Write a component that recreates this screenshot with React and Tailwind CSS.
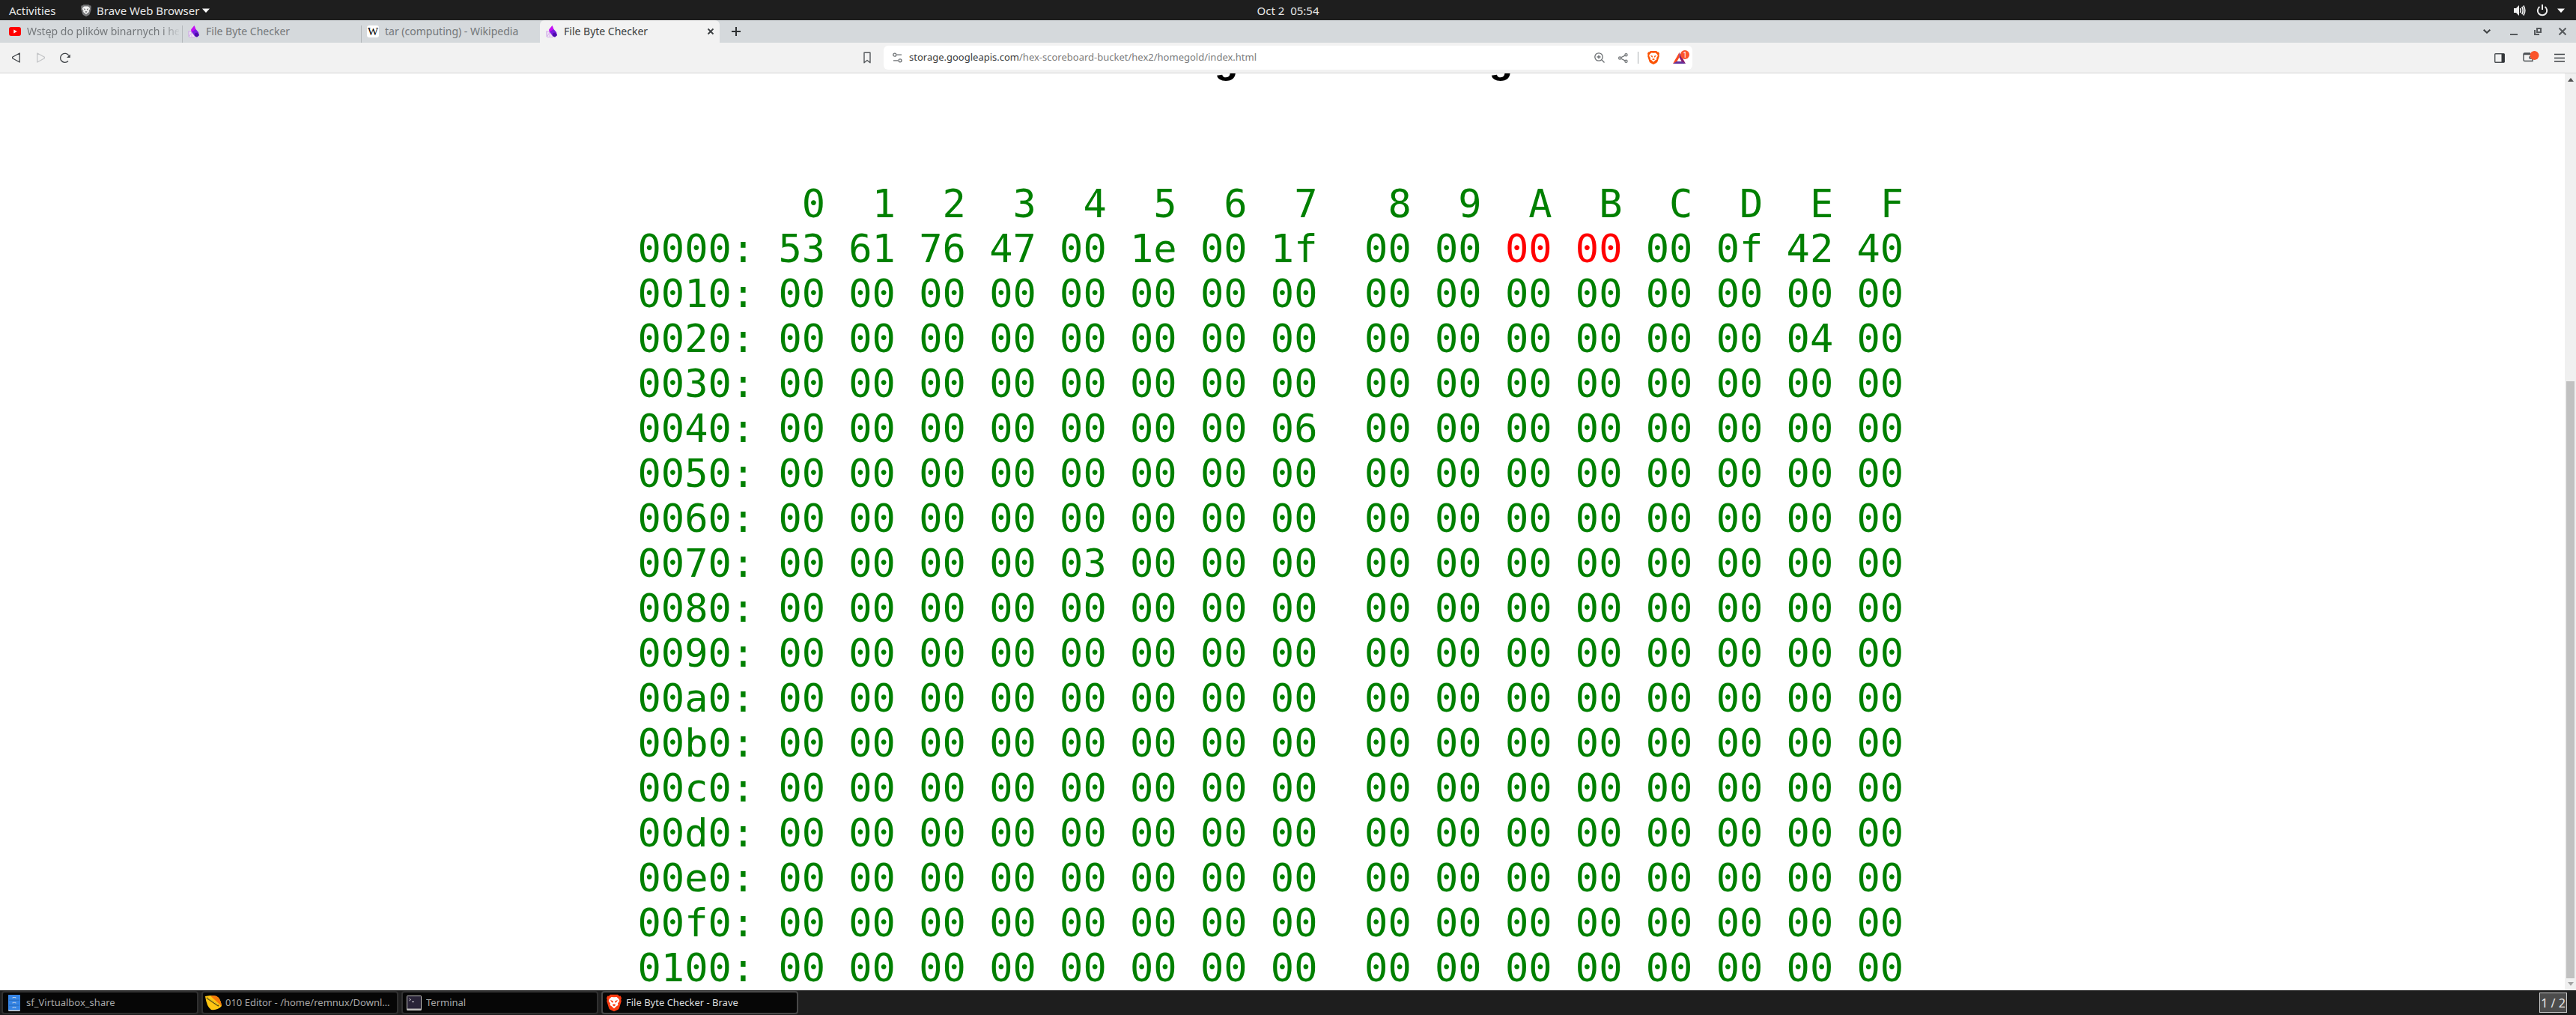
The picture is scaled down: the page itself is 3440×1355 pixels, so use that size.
import React from "react";

const cols = "0123456789ABCDEF".split("");
const special = {
  0: "53 61 76 47 00 1e 00 1f 00 00 00 00 00 0f 42 40",
  2: "00 00 00 00 00 00 00 00 00 00 00 00 00 00 04 00",
  4: "00 00 00 00 00 00 00 06 00 00 00 00 00 00 00 00",
  7: "00 00 00 00 03 00 00 00 00 00 00 00 00 00 00 00",
};
const rows = Array.from({ length: 17 }, (_, i) => ({
  addr: (i * 16).toString(16).padStart(4, "0") + ":",
  bytes: special[i] ? special[i].split(" ") : Array(16).fill("00"),
}));

function cellPad(c) {
  if (c === 8) return "pl-[2ch]";
  if (c === 15) return "pl-[1ch] pr-[1ch]";
  return "pl-[1ch]";
}

function Lion({ className, shield, face }) {
  return (
    <svg viewBox="0 0 16 18" className={className} aria-hidden="true">
      <path d="M4 0h8l1.6 1.6 1.4-.2 1 2.4-.6 1.5.4 1.6-2.2 7.2q-.4 1.2-1.6 2L8 18l-4-1.9q-1.2-.8-1.6-2L.2 6.9.6 5.3 0 3.800l1-2.400 1.400.2Z" fill={shield} />
      <path d="M8 2.800 5.200 2.600 2.800 4.800 2.200 6.800 4 9.400 3.600 11.200 5.600 12.600 8 14.800 10.400 12.600 12.400 11.200 12 9.400 13.800 6.800 13.200 4.800 10.800 2.600Z" fill={face} />
      <path d="M4 5.800 7 6.800 6.700 9 4.900 7.300ZM12 5.800 9 6.800 9.300 9 11.100 7.300ZM6 11 8 9.900 10 11 8 12.500Z" fill={shield} />
    </svg>
  );
}

function Crystal() {
  return (
    <svg viewBox="0 0 16 16" className="size-4 shrink-0" aria-hidden="true">
      <path d="M1 7.500 5 9l5 6.500H1.500ZM1 7.500v7.500M5 9l-3.500 6M5 9v6" fill="#f3e8f8" stroke="#cfa8e6" strokeWidth=".8" />
      <path d="M8.500 0 4 5.500 4.500 8.500 8 9.500 10.500 5Z" fill="#c60cf5" />
      <path d="M5 8.500 10.500 5 14 9 15 13 12 15.500 9 14Z" fill="#7a1be0" />
      <path d="m9.500 10 3-.5 2.500 3.500-3 2.500-3-1.500Z" fill="#4d0dab" />
    </svg>
  );
}

function Youtube() {
  return (
    <svg viewBox="0 0 16 12" className="w-4 shrink-0" aria-hidden="true">
      <rect width="16" height="12" rx="3" fill="#f00" />
      <path d="m6.300 3.500 4.500 2.500-4.500 2.500Z" fill="#fff" />
    </svg>
  );
}

function Wiki() {
  return (
    <span className="flex size-4 shrink-0 items-center justify-center rounded-[3px] bg-white font-['Liberation_Serif',serif] text-[15px] leading-4 text-black" aria-hidden="true">W</span>
  );
}

function TopBar() {
  return (
    <header className="grid h-[27px] shrink-0 grid-cols-[1fr_auto_1fr] items-center bg-[#1e1e1e] text-[15px] leading-5 text-[#e6e6e6]">
      <div className="flex items-center pl-3">
        <button className="w-24 text-left">Activities</button>
        <button className="flex items-center">
          <Lion className="mr-[7px] h-4 w-3.5" shield="#77787a" face="#f4f4f4" />
          Brave Web Browser
          <svg viewBox="0 0 10 6" className="ml-1 w-2.5" aria-hidden="true"><path d="M0 .5h10L5 6Z" fill="#fff" /></svg>
        </button>
      </div>
      <time className="whitespace-pre">Oct 2  05:54</time>
      <button className="flex items-center justify-self-end pr-[15px]" aria-label="System menu">
        <svg viewBox="0 0 16 16" className="mr-3.5 size-4" fill="none" stroke="#eee" strokeWidth="1.700">
          <path d="M0 5h3l4-4v14l-4-4H0Z" fill="#eee" stroke="none" />
          <path d="M8.500 5q1.500 3 0 6M10.800 3q2.800 5 0 10M12.800 1.500q4 6.500 0 13" />
        </svg>
        <svg viewBox="0 0 16 16" className="mr-3 size-4" fill="none" stroke="#eee" strokeWidth="2">
          <path d="M4.500 3a6.200 6.200 0 1 0 7 0M8 0v7" />
        </svg>
        <svg viewBox="0 0 10 6" className="w-2.5"><path d="M0 .5h10L5 6Z" fill="#fff" /></svg>
      </button>
    </header>
  );
}

function Tab({ icon, title, className }) {
  return (
    <button className={"flex items-center overflow-hidden whitespace-nowrap text-[#74787b] " + className}>
      {icon}
      <span className="ml-2 min-w-0 flex-1 overflow-hidden text-left">{title}</span>
    </button>
  );
}

function TabStrip() {
  return (
    <nav className="flex h-[30px] shrink-0 items-stretch bg-[#d5d9dc] text-sm" aria-label="Tabs">
      <Tab className="w-[243px] pl-3 pr-1 [&>span]:[mask-image:linear-gradient(to_right,#000_180px,transparent_205px)]" icon={<Youtube />} title="Wstęp do plików binarnych i hex" />
      <span className="mt-[7px] w-px bg-[#b4b8bb]" />
      <Tab className="w-[238px] pl-[7px]" icon={<Crystal />} title="File Byte Checker" />
      <span className="mt-[7px] w-px bg-[#b4b8bb]" />
      <Tab className="w-[238px] pl-[7px]" icon={<Wiki />} title="tar (computing) - Wikipedia" />
      <div className="flex w-60 items-center rounded-t-md bg-[#f2f2f2] pl-2 pr-[7px] text-[#3b3e40]">
        <Crystal />
        <button className="ml-2 flex-1 text-left">File Byte Checker</button>
        <button aria-label="Close tab">
          <svg viewBox="0 0 10 10" className="size-2.5" stroke="#3b3e40" strokeWidth="1.800"><path d="m1.500 1.500 7 7M8.500 1.500l-7 7" /></svg>
        </button>
      </div>
      <button className="ml-4" aria-label="New tab">
        <svg viewBox="0 0 12 12" className="size-3" stroke="#2f3234" strokeWidth="2"><path d="M6 0v12M0 6h12" /></svg>
      </button>
      <div className="ml-auto flex items-center pr-[13px]">
        <button aria-label="Search tabs" className="mr-[26px]">
          <svg viewBox="0 0 10 6" className="w-2.5" fill="none" stroke="#3b3e40" strokeWidth="2"><path d="m.7.7 4.300 4 4.300-4" /></svg>
        </button>
        <button aria-label="Minimize" className="mr-[22px]">
          <svg viewBox="0 0 10 10" className="size-2.5" stroke="#55595c" strokeWidth="2"><path d="M0 9h10" /></svg>
        </button>
        <button aria-label="Restore" className="mr-[23px]">
          <svg viewBox="0 0 10 10" className="size-2.5" fill="none" stroke="#55595c" strokeWidth="2"><path d="M4 1h5v5H4ZM1 3v6h6" /></svg>
        </button>
        <button aria-label="Close">
          <svg viewBox="0 0 10 10" className="size-2.5" stroke="#55595c" strokeWidth="2"><path d="m.5.5 9 9M9.500.5l-9 9" /></svg>
        </button>
      </div>
    </nav>
  );
}

function Toolbar() {
  return (
    <div className="grid h-[41px] shrink-0 grid-cols-[1fr_minmax(0,1080px)_1fr] items-center border-b border-[#d4d4d4] bg-[#f2f2f2]">
      <div className="flex items-center gap-[20px] pl-4 pr-[17px]">
        <button aria-label="Back"><svg viewBox="0 0 12 14" className="h-3.5 w-3" fill="none" stroke="#3e4246" strokeWidth="1.300"><path d="M10.200 1v12L1 8Q0 7 1 6Z" strokeLinejoin="round" /></svg></button>
        <button aria-label="Forward"><svg viewBox="0 0 12 14" className="h-3.5 w-3" fill="none" stroke="#c3c5c7" strokeWidth="1.300"><path d="M1.800 1v12L11 8q1-1 0-2Z" strokeLinejoin="round" /></svg></button>
        <button aria-label="Reload"><svg viewBox="0 0 14 14" className="size-3.5" fill="none" stroke="#3e4246" strokeWidth="1.300"><path d="M11 11.500A6 6 0 1 1 11.800 4.200" /><path d="M13.800 2.500v4.500H9Z" fill="#3e4246" stroke="none" /></svg></button>
        <button aria-label="Bookmark" className="ml-auto"><svg viewBox="0 0 10 16" className="h-4 w-2.5" fill="none" stroke="#55595c" strokeWidth="1.400"><path d="M1 1.200h8v13.500L5 11.500 1 14.700Z" strokeLinejoin="round" /></svg></button>
      </div>
      <div className="flex h-8 items-center rounded-md bg-white pl-3 pr-1">
        <svg viewBox="0 0 13 15" className="mr-[9px] h-[15px] w-[13px]" fill="none" stroke="#6b6f72" strokeWidth="1.300"><circle cx="2.800" cy="3.200" r="2" /><path d="M5.500 3.200H12M1 10.800h6" /><circle cx="10" cy="10.800" r="2" /></svg>
        <p className="flex-1 text-[13px] text-[#7c7c7c]"><span className="text-[#3a3d40]">storage.googleapis.com</span>/hex-scoreboard-bucket/hex2/homegold/index.html</p>
        <button aria-label="Zoom" className="mr-[18px]"><svg viewBox="0 0 14 14" className="size-3.5" fill="none" stroke="#6b6f72" strokeWidth="1.300"><circle cx="6" cy="6" r="5.200" /><path d="m10 10 3.500 3.500M3.500 6h5M6 3.500v5" /></svg></button>
        <button aria-label="Share" className="mr-[13px]"><svg viewBox="0 0 13 13" className="size-[13px]" fill="none" stroke="#6b6f72" strokeWidth="1.200"><circle cx="2.200" cy="6.500" r="1.600" /><circle cx="10.500" cy="2.300" r="1.600" /><circle cx="10.500" cy="10.700" r="1.600" /><path d="m3.700 5.800 5.300-2.700M3.700 7.200 9 9.900" /></svg></button>
        <span className="mr-3 h-4 w-px bg-[#aaadb0]" />
        <button aria-label="Shields" className="mr-[17px]"><Lion className="h-[18px] w-4" shield="#fb5303" face="#fff" /></button>
        <button aria-label="Rewards"><svg viewBox="0 0 23 20" className="h-5 w-[23px]"><path d="M9.500 3 1 18l5-2.300 3.500-6.200Z" fill="#fa4a20" /><path d="m9.500 3 8.500 15-5-2.300-3.500-6.200Z" fill="#8b1a6b" /><path d="M1 18h17l-5-3H6Z" fill="#61319b" /><circle cx="17" cy="6" r="6" fill="#fb542b" /><text x="17" y="9.500" fontSize="10" fill="#fff" textAnchor="middle">1</text></svg></button>
      </div>
      <div className="flex items-center justify-end pr-[15px]">
        <button aria-label="Side panel" className="mr-6"><svg viewBox="0 0 14 13" className="h-[13px] w-3.5"><rect x=".7" y=".7" width="12.600" height="11.600" rx="1" fill="none" stroke="#4c5054" strokeWidth="1.400" /><path d="M9.500 1h4v11h-4Z" fill="#34373a" /></svg></button>
        <button aria-label="Wallet" className="mr-5"><svg viewBox="0 0 22 16" className="mb-1 h-4 w-[22px]"><path d="M13 5.500H1V13q0 1.500 1.500 1.500H13V11H9.500Q8 10 9.500 8.500H13ZM1 5.500q0-1.500 1.500-1.500H10" fill="none" stroke="#4c5054" strokeWidth="1.400" /><circle cx="15.500" cy="7" r="6" fill="#fb542b" /></svg></button>
        <button aria-label="Menu"><svg viewBox="0 0 14 12" className="h-3 w-3.5" stroke="#3e4246" strokeWidth="1.500"><path d="M0 1.500h14M0 6.500h14M0 11h14" /></svg></button>
      </div>
    </div>
  );
}

function HexTable() {
  return (
    <table className="mx-auto border-collapse whitespace-nowrap font-['DejaVu_Sans_Mono',monospace] text-[52px] leading-[60px] text-[#008000]">
      <thead>
        <tr>
          <td className="p-0" />
          {cols.map((c, i) => (
            <th key={c} scope="col" className={"py-0 text-right font-normal " + cellPad(i)}>{c}</th>
          ))}
        </tr>
      </thead>
      <tbody>
        {rows.map((r, y) => (
          <tr key={r.addr}>
            <th scope="row" className="p-0 font-normal">{r.addr}</th>
            {r.bytes.map((b, x) => (
              <td key={x} className={"py-0 " + cellPad(x) + (y === 0 && (x === 10 || x === 11) ? " text-[#ff0000]" : "")}>{b}</td>
            ))}
          </tr>
        ))}
      </tbody>
    </table>
  );
}

function Task({ icon, title, active }) {
  return (
    <button className={"flex h-[31px] w-[263px] items-center overflow-hidden rounded border-2 bg-[#060606] pl-[7px] pr-1 text-[13px] whitespace-nowrap " + (active ? "border-[#484848] text-[#dedede]" : "border-[#303030] text-[#a8a8a8]")}>
      {icon}
      <span className="truncate">{title}</span>
    </button>
  );
}

function Taskbar() {
  return (
    <footer className="flex h-[33px] shrink-0 items-center bg-[#1e1e1e]">
      <div className="flex gap-1 pl-0.5">
        <Task title="sf_Virtualbox_share" icon={
          <svg viewBox="0 0 16 22" className="mr-2 h-[22px] w-4 shrink-0"><rect width="16" height="22" rx="1.500" fill="#d6d3cf" /><rect width="16" height="20.500" rx="1" fill="#3584e4" /><path d="M1 7.200h14M1 14h14" stroke="#2468b8" /><path d="M6 4.700V3.500h4v1.200M6 11.500v-1.200h4v1.200M6 18v-1.200h4V18" fill="none" stroke="#b7cce6" /></svg>} />
        <Task title="010 Editor - /home/remnux/Downl…" icon={
          <svg viewBox="0 0 23 20" className="-ml-1 mr-1 h-5 w-[23px] shrink-0"><path d="M0 1Q14-2 18 3q3 4 4 11-5 6-14 5Q2 15 0 1Z" fill="#ffc512" /><path d="M7 .5Q14-1 18 3q3 4 4 11Q15 8 7 .5Z" fill="#f57a0b" /><path d="m2 3 16 11" stroke="#5b4a12" strokeWidth="2" /><path d="m3 3 14 9.500" stroke="#e8cd2c" /></svg>} />
        <Task title="Terminal" icon={
          <svg viewBox="0 0 20 20" className="-ml-0.5 mr-1.5 size-5 shrink-0"><rect width="20" height="20" rx="1.500" fill="#c0bfbc" /><rect x="1" y="1" width="18" height="16.500" fill="#2a2438" /><path d="m3.500 4 2 1.500-2 1.500M7 8.500h3" fill="none" stroke="#ddd" /></svg>} />
        <Task active title="File Byte Checker - Brave" icon={<Lion className="-ml-0.5 mr-1.5 h-6 w-5 shrink-0" shield="#fb3c12" face="#fff" />} />
      </div>
      <button className="mr-3 ml-auto h-[27px] w-[37px] border border-[#c8c8c8] bg-[#4c4c4c] text-base leading-5 text-[#e6e6e6]">1 / 2</button>
    </footer>
  );
}

export default function App() {
  return (
    <div className="flex h-screen flex-col overflow-hidden bg-white font-['Noto_Sans',sans-serif]">
      <TopBar />
      <TabStrip />
      <Toolbar />
      <div className="flex min-h-0 flex-1">
        <main className="min-w-0 flex-1 overflow-hidden">
          <h1 className="-mt-[55px] mb-[127px] flex h-[72px] items-center justify-center gap-[335px] pl-[217px] font-['Liberation_Sans',sans-serif] text-[52px] leading-[72px] font-bold text-black">
            <span>g</span>
            <span>g</span>
          </h1>
          <HexTable />
        </main>
        <div className="flex w-[15px] flex-col items-center bg-[#f0f0f0] py-1.5" aria-hidden="true">
          <svg viewBox="0 0 8 5" className="w-2"><path d="m0 5 4-5 4 5Z" fill="#505050" /></svg>
          <span className="mt-[400px] mb-[5px] w-[11px] flex-1 bg-[#c1c1c1]" />
          <svg viewBox="0 0 8 5" className="w-2"><path d="m0 0 4 5 4-5Z" fill="#a3a3a3" /></svg>
        </div>
      </div>
      <Taskbar />
    </div>
  );
}
